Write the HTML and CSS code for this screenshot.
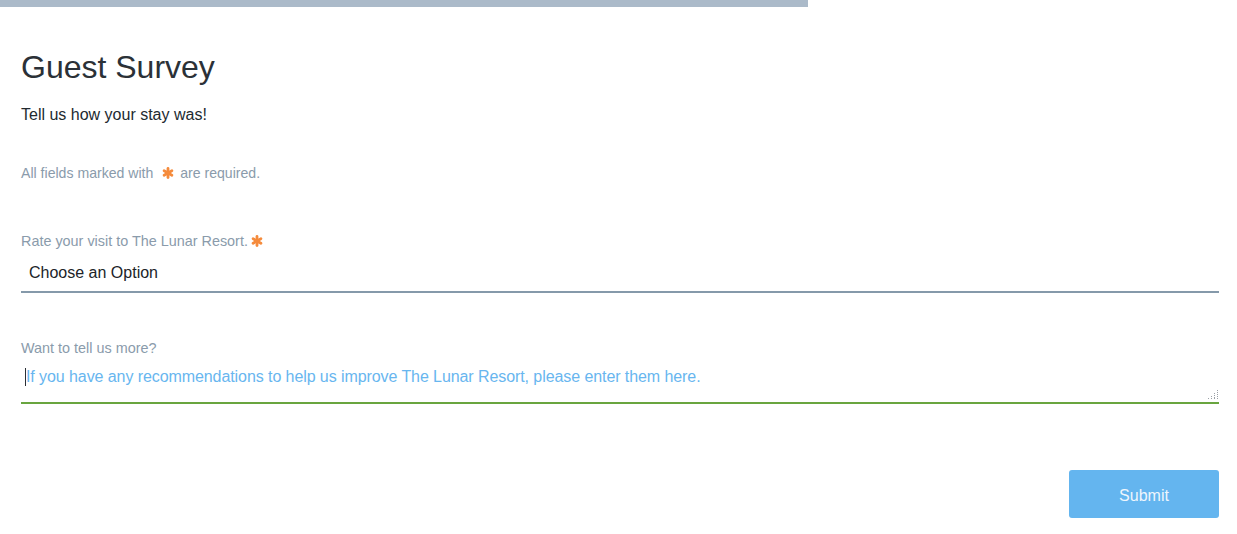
FILE: index.html
```html
<!DOCTYPE html>
<html>
<head>
<meta charset="utf-8">
<link rel="stylesheet" href="styles.css">
</head>
<body>
<div class="progress"><div class="progress-fill"></div></div>
<main class="survey">
  <h1 class="title">Guest Survey</h1>
  <p class="intro">Tell us how your stay was!</p>
  <p class="note">All fields marked with <span class="req"><svg viewBox="0 0 12 12" width="12" height="12"><g stroke="#f58b3c" stroke-width="2.8" stroke-linecap="round"><line x1="6" y1="1.5" x2="6" y2="10.5"/><line x1="2.1" y1="3.75" x2="9.9" y2="8.25"/><line x1="2.1" y1="8.25" x2="9.9" y2="3.75"/></g></svg></span> are required.</p>

  <div class="field field-select">
    <label class="label">Rate your visit to The Lunar Resort. <span class="req req-label"><svg viewBox="0 0 12 12" width="12" height="12"><g stroke="#f58b3c" stroke-width="2.8" stroke-linecap="round"><line x1="6" y1="1.5" x2="6" y2="10.5"/><line x1="2.1" y1="3.75" x2="9.9" y2="8.25"/><line x1="2.1" y1="8.25" x2="9.9" y2="3.75"/></g></svg></span></label>
    <div class="select">Choose an Option</div>
  </div>

  <div class="field field-text">
    <label class="label">Want to tell us more?</label>
    <div class="textarea">
      <span class="caret"></span><span class="placeholder">If you have any recommendations to help us improve The Lunar Resort, please enter them here.</span>
      <svg class="grip" viewBox="0 0 12 12" width="12" height="12"><g fill="#9aa0a6"><rect x="10" y="1" width="1" height="1"/><rect x="10" y="3" width="1" height="1"/><rect x="10" y="5" width="1" height="1"/><rect x="10" y="7" width="1" height="1"/><rect x="10" y="9" width="1" height="1"/><rect x="7" y="4" width="1" height="1"/><rect x="7" y="6" width="1" height="1"/><rect x="7" y="8" width="1" height="1"/><rect x="4" y="7" width="1" height="1"/><rect x="4" y="9" width="1" height="1"/><rect x="7" y="9" width="1" height="1"/><rect x="1" y="9" width="1" height="1"/></g></svg>
    </div>
  </div>

  <div class="actions">
    <button class="submit">Submit</button>
  </div>
</main>
</body>
</html>
```

FILE: styles.css
```css
html, body {
  margin: 0;
  padding: 0;
  background: #ffffff;
}
body {
  font-family: "Liberation Sans", Arial, sans-serif;
  color: #24292e;
}
.progress {
  height: 7px;
  width: 100%;
}
.progress-fill {
  height: 7px;
  width: 808px;
  background: #abbac9;
}
.survey {
  padding: 0 18px 0 21px;
}
.title {
  font-size: 32px;
  font-weight: normal;
  line-height: 36px;
  margin: 42px 0 0;
  color: #2b3137;
}
.intro {
  font-size: 16px;
  line-height: 20px;
  margin: 20px 0 0;
  color: #222a30;
}
.note {
  font-size: 14.1px;
  line-height: 18px;
  margin: 39px 0 0;
  color: #8a9bab;
}
.req {
  display: inline-block;
  vertical-align: -1px;
  margin: 0 1px;
  line-height: 0;
}
.note .req { margin-left: 5px; margin-right: 2px; }
.req-label { margin-left: -1px; }
.field {
  display: flex;
  flex-direction: column;
}
.field-select {
  margin-top: 50px;
}
.label {
  font-size: 14.4px;
  line-height: 18px;
  color: #8a9bab;
}
.select {
  font-size: 16px;
  line-height: 20px;
  color: #202428;
  padding: 13px 8px 8px;
  border-bottom: 2px solid #8599aa;
}
.field-text {
  margin-top: 46px;
}
.textarea {
  position: relative;
  display: flex;
  align-items: flex-start;
  padding: 10px 4px 15px;
  border-bottom: 2px solid #69a53f;
  font-size: 16px;
  line-height: 20px;
}
.caret {
  display: inline-block;
  width: 1px;
  height: 18px;
  background: #2a2f35;
  margin-top: 1px;
}
.placeholder {
  color: #68b6ef;
  letter-spacing: -0.08px;
}
.grip {
  position: absolute;
  right: 0;
  bottom: 1px;
}
.actions {
  display: flex;
  justify-content: flex-end;
  margin-top: 66px;
}
.submit {
  width: 150px;
  height: 48px;
  border: none;
  border-radius: 3px;
  background: #64b5ef;
  color: #eef6fd;
  font-family: "Liberation Sans", Arial, sans-serif;
  font-size: 16px;
  padding: 3px 0 0;
}
```
